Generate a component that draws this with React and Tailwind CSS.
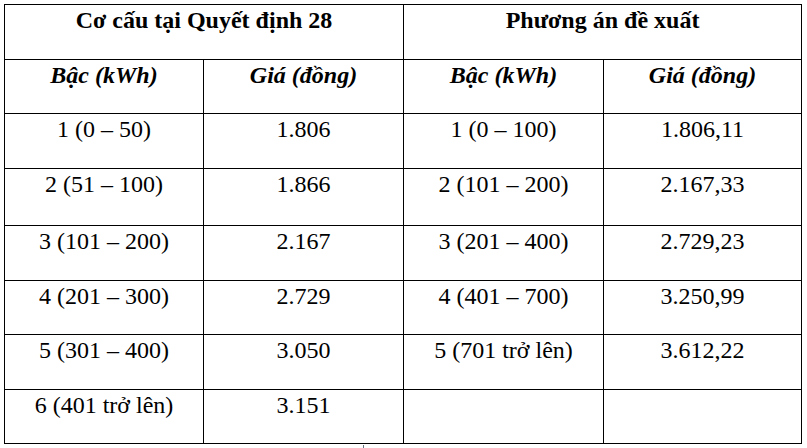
const rows = [
  ['1 (0 – 50)', '1.806', '1 (0 – 100)', '1.806,11'],
  ['2 (51 – 100)', '1.866', '2 (101 – 200)', '2.167,33'],
  ['3 (101 – 200)', '2.167', '3 (201 – 400)', '2.729,23'],
  ['4 (201 – 300)', '2.729', '4 (401 – 700)', '3.250,99'],
  ['5 (301 – 400)', '3.050', '5 (701 trở lên)', '3.612,22'],
  ['6 (401 trở lên)', '3.151', '', ''],
];

const heights = ['h-[55px]', 'h-[57px]', 'h-[55px]', 'h-[54px]', 'h-[55px]', 'h-[54px]'];

const cell = 'border border-black align-top pt-[1px] text-center font-[family-name:Liberation_Serif,Times_New_Roman,serif]';

export default function App() {
  return (
    <div className="relative w-[807px] h-[448px] bg-white text-black">
      <div className="pt-[4px] pl-[4px]">
        <table className="border-collapse table-fixed w-[797px] text-black text-[24px] leading-[28px] font-[family-name:Liberation_Serif,Times_New_Roman,serif]">
          <colgroup>
            <col className="w-[199px]" />
            <col className="w-[200px]" />
            <col className="w-[200px]" />
            <col className="w-[198px]" />
          </colgroup>
          <tbody>
            <tr className="h-[55px]">
              <th colSpan={2} className={`${cell} font-bold`}>Cơ cấu tại Quyết định 28</th>
              <th colSpan={2} className={`${cell} font-bold`}>Phương án đề xuất</th>
            </tr>
            <tr className="h-[54px]">
              {['Bậc (kWh)', 'Giá (đồng)', 'Bậc (kWh)', 'Giá (đồng)'].map((t, i) => (
                <th key={i} className={`${cell} font-bold italic`}>{t}</th>
              ))}
            </tr>
            {rows.map((r, i) => (
              <tr key={i} className={heights[i]}>
                {r.map((c, j) => (
                  <td key={j} className={cell}>{c}</td>
                ))}
              </tr>
            ))}
          </tbody>
        </table>
      </div>
      <div className="absolute left-[363px] top-[445px] w-px h-[3px] bg-gray-500" />
    </div>
  );
}
